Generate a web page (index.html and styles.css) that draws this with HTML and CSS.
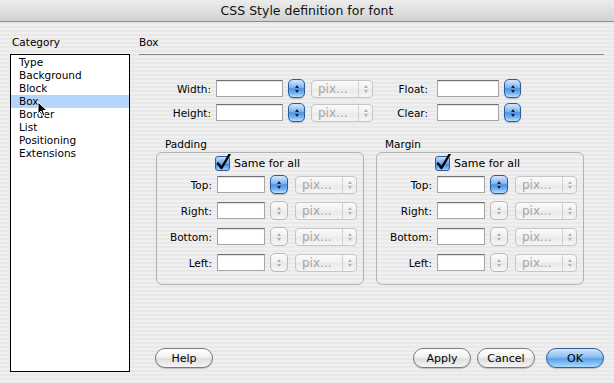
FILE: index.html
```html
<!DOCTYPE html>
<html lang="en">
<head>
  <meta charset="UTF-8">
  <title>CSS Style definition for font</title>
  <link rel="stylesheet" href="styles.css">
</head>
<body>
  <header class="titlebar">CSS Style definition for font</header>

  <div class="dialog">
    <aside class="sidebar">
      <div class="pane-title">Category</div>
      <ul class="category-list">
        <li>Type</li>
        <li>Background</li>
        <li>Block</li>
        <li class="selected">Box</li>
        <li>Border</li>
        <li>List</li>
        <li>Positioning</li>
        <li>Extensions</li>
      </ul>
    </aside>

    <main class="panel">
      <div class="panel-title">Box</div>

      <div class="size-rows">
        <div class="row">
          <label class="lbl lbl-size">Width:</label>
          <input class="field field-size" type="text">
          <span class="stepper active gap-s"></span>
          <span class="unit gap-m"><span class="unit-text">pix...</span><span class="unit-arrows"></span></span>
          <label class="lbl lbl-float">Float:</label>
          <input class="field field-float" type="text">
          <span class="stepper active gap-s"></span>
        </div>
        <div class="row">
          <label class="lbl lbl-size">Height:</label>
          <input class="field field-size" type="text">
          <span class="stepper active gap-s"></span>
          <span class="unit gap-m"><span class="unit-text">pix...</span><span class="unit-arrows"></span></span>
          <label class="lbl lbl-float">Clear:</label>
          <input class="field field-float" type="text">
          <span class="stepper active gap-s"></span>
        </div>
      </div>

      <div class="groups">
        <section class="group">
          <div class="group-title">Padding</div>
          <div class="group-box">
            <div class="same">
              <svg class="checkbox" width="16" height="17" viewBox="0 0 16 17">
                <defs>
                  <linearGradient id="cbA" x1="0" y1="0" x2="0" y2="1">
                    <stop offset="0" stop-color="#cfe4fb"/>
                    <stop offset="0.5" stop-color="#6aa6ea"/>
                    <stop offset="0.55" stop-color="#3f88e0"/>
                    <stop offset="1" stop-color="#a6d6ff"/>
                  </linearGradient>
                </defs>
                <rect x="0.5" y="2.5" width="14" height="14" rx="2.5" fill="url(#cbA)" stroke="#2c5c9e"/>
                <path d="M3 9.5 L6.5 14 L14.5 0.5" fill="none" stroke="#000" stroke-width="2.4" stroke-linecap="round" stroke-linejoin="round"/>
              </svg>
              <span>Same for all</span>
            </div>
            <div class="row box-row">
              <label class="lbl lbl-side">Top:</label>
              <input class="field field-side" type="text">
              <span class="stepper active gap-s wide"></span>
              <span class="unit gap-l"><span class="unit-text">pix...</span><span class="unit-arrows"></span></span>
            </div>
            <div class="row box-row">
              <label class="lbl lbl-side">Right:</label>
              <input class="field field-side" type="text">
              <span class="stepper gap-s wide"></span>
              <span class="unit gap-l"><span class="unit-text">pix...</span><span class="unit-arrows"></span></span>
            </div>
            <div class="row box-row">
              <label class="lbl lbl-side">Bottom:</label>
              <input class="field field-side" type="text">
              <span class="stepper gap-s wide"></span>
              <span class="unit gap-l"><span class="unit-text">pix...</span><span class="unit-arrows"></span></span>
            </div>
            <div class="row box-row">
              <label class="lbl lbl-side">Left:</label>
              <input class="field field-side" type="text">
              <span class="stepper gap-s wide"></span>
              <span class="unit gap-l"><span class="unit-text">pix...</span><span class="unit-arrows"></span></span>
            </div>
          </div>
        </section>

        <section class="group">
          <div class="group-title">Margin</div>
          <div class="group-box">
            <div class="same">
              <svg class="checkbox" width="16" height="17" viewBox="0 0 16 17">
                <defs>
                  <linearGradient id="cbB" x1="0" y1="0" x2="0" y2="1">
                    <stop offset="0" stop-color="#cfe4fb"/>
                    <stop offset="0.5" stop-color="#6aa6ea"/>
                    <stop offset="0.55" stop-color="#3f88e0"/>
                    <stop offset="1" stop-color="#a6d6ff"/>
                  </linearGradient>
                </defs>
                <rect x="0.5" y="2.5" width="14" height="14" rx="2.5" fill="url(#cbB)" stroke="#2c5c9e"/>
                <path d="M3 9.5 L6.5 14 L14.5 0.5" fill="none" stroke="#000" stroke-width="2.4" stroke-linecap="round" stroke-linejoin="round"/>
              </svg>
              <span>Same for all</span>
            </div>
            <div class="row box-row">
              <label class="lbl lbl-side">Top:</label>
              <input class="field field-side" type="text">
              <span class="stepper active gap-s wide"></span>
              <span class="unit gap-l"><span class="unit-text">pix...</span><span class="unit-arrows"></span></span>
            </div>
            <div class="row box-row">
              <label class="lbl lbl-side">Right:</label>
              <input class="field field-side" type="text">
              <span class="stepper gap-s wide"></span>
              <span class="unit gap-l"><span class="unit-text">pix...</span><span class="unit-arrows"></span></span>
            </div>
            <div class="row box-row">
              <label class="lbl lbl-side">Bottom:</label>
              <input class="field field-side" type="text">
              <span class="stepper gap-s wide"></span>
              <span class="unit gap-l"><span class="unit-text">pix...</span><span class="unit-arrows"></span></span>
            </div>
            <div class="row box-row">
              <label class="lbl lbl-side">Left:</label>
              <input class="field field-side" type="text">
              <span class="stepper gap-s wide"></span>
              <span class="unit gap-l"><span class="unit-text">pix...</span><span class="unit-arrows"></span></span>
            </div>
          </div>
        </section>
      </div>

      <div class="buttons">
        <button class="btn">Help</button>
        <button class="btn btn-apply">Apply</button>
        <button class="btn btn-cancel">Cancel</button>
        <button class="btn btn-ok">OK</button>
      </div>
    </main>
  </div>

  <!-- mouse pointer over the list -->
  <svg class="cursor" width="11" height="16" viewBox="0 0 11 16">
    <path d="M1 1 L1 13 L4 10 L6 15 L8 14 L6 9.5 L10 9.5 Z" fill="#000" stroke="#fff" stroke-width="1" stroke-linejoin="round"/>
  </svg>
</body>
</html>
```

FILE: styles.css
```css
:root {
  --stripe-a: #efefef;
  --stripe-b: #e8e8e8;
  --label-color: #000;
  --disabled-text: #a6a6a6;
  --field-border: #8f8f8f;
}

* {
  box-sizing: border-box;
}

body {
  margin: 0;
  width: 614px;
  height: 383px;
  overflow: hidden;
  font-family: "Lucida Grande", "DejaVu Sans", sans-serif;
  font-size: 10.5px;
  color: var(--label-color);
  background: repeating-linear-gradient(to bottom, var(--stripe-a) 0 2px, var(--stripe-b) 2px 4px);
}

.titlebar {
  height: 22px;
  line-height: 21px;
  text-align: center;
  font-size: 12.5px;
  color: #111;
  background: linear-gradient(to bottom, #ececec, #d2d2d2);
  border-bottom: 1px solid #8c8c8c;
}

.dialog {
  display: flex;
  padding: 0 10px;
}

.sidebar {
  width: 120px;
}

.pane-title,
.panel-title {
  padding-top: 13px;
  line-height: 14px;
}

.pane-title {
  padding-left: 2px;
  margin-bottom: 5px;
}

.category-list {
  list-style: none;
  margin: 0;
  padding: 1px 0 0;
  height: 318px;
  background: #fff;
  border: 1px solid #000;
}

.category-list li {
  line-height: 13px;
  padding-left: 8px;
}

.category-list li.selected {
  background: #b5d4fc;
}

.panel {
  margin-left: 9px;
  width: 465px;
}

.panel-title {
  padding-bottom: 5px;
  border-bottom: 1px solid #8a8a8a;
}

.size-rows {
  margin-top: 24px;
  display: flex;
  flex-direction: column;
  gap: 5px;
}

.row {
  display: flex;
  align-items: center;
  height: 19px;
}

.lbl {
  text-align: right;
  flex: none;
}

.lbl-size { width: 72px; }
.lbl-float { width: 55px; }
.lbl-side { width: 55px; }

.field {
  flex: none;
  height: 17px;
  margin: 0 0 0 5px;
  padding: 0;
  background: #fff;
  border: 1px solid #a6a6a6;
  border-top-color: #6f6f6f;
  box-shadow: inset 0 1px 1px rgba(0, 0, 0, 0.12);
}

.field-size { width: 67px; }
.field-float { width: 62px; margin-left: 9px; }
.field-side { width: 48px; }

.stepper {
  flex: none;
  width: 17px;
  height: 19px;
  border-radius: 5px;
  border: 1px solid #b9b9b9;
  background: linear-gradient(to bottom, #fbfbfb, #f0f0f0 50%, #e8e8e8 51%, #f7f7f7);
  display: flex;
  flex-direction: column;
  align-items: center;
  justify-content: center;
  gap: 2px;
}

.stepper.wide { width: 18px; }

.stepper::before,
.stepper::after {
  content: "";
  border-left: 2.5px solid transparent;
  border-right: 2.5px solid transparent;
}

.stepper::before { border-bottom: 3px solid #b0b0b0; }
.stepper::after { border-top: 3px solid #b0b0b0; }

.stepper.active {
  border-color: #2d5b98;
  background: linear-gradient(to bottom, #d6e8fc, #7fb3ee 45%, #4a8fe2 52%, #78b7f5 80%, #b9e3ff);
  box-shadow: 0 1px 1px rgba(0, 0, 0, 0.2);
}

.stepper.active::before { border-bottom-color: #14223a; }
.stepper.active::after { border-top-color: #14223a; }

.gap-s { margin-left: 5px; }
.gap-m { margin-left: 6px; }
.gap-l { margin-left: 7px; }

.unit {
  flex: none;
  width: 62px;
  height: 18px;
  display: flex;
  align-items: stretch;
  border: 1px solid #c6c6c6;
  border-radius: 4px;
  background: linear-gradient(to bottom, #fafafa, #f0f0f0 50%, #e9e9e9 51%, #f5f5f5);
  color: var(--disabled-text);
}

.unit-text {
  flex: 1;
  padding-left: 6px;
  line-height: 16px;
  font-size: 12px;
}

.unit-arrows {
  width: 14px;
  border-left: 1px solid #d0d0d0;
  display: flex;
  flex-direction: column;
  align-items: center;
  justify-content: center;
  gap: 2px;
}

.unit-arrows::before,
.unit-arrows::after {
  content: "";
  border-left: 2.5px solid transparent;
  border-right: 2.5px solid transparent;
}

.unit-arrows::before { border-bottom: 3px solid #b4b4b4; }
.unit-arrows::after { border-top: 3px solid #b4b4b4; }

.groups {
  display: flex;
  gap: 12px;
  margin-top: 15px;
  padding-left: 17px;
}

.group {
  width: 208px;
}

.group-title {
  padding-left: 9px;
  line-height: 14px;
  margin-bottom: 1px;
}

.group-box {
  height: 133px;
  padding-top: 1px;
  border: 1px solid #b2b2b2;
  border-radius: 6px;
  background: rgba(255, 255, 255, 0.08);
}

.same {
  display: flex;
  align-items: flex-end;
  gap: 3px;
  padding-left: 58px;
  height: 17px;
  line-height: 14px;
  font-size: 11px;
}

.box-row {
  margin-top: 7px;
}

.same + .box-row {
  margin-top: 4px;
}

.buttons {
  display: flex;
  margin-top: 63px;
  padding-left: 16px;
}

.btn {
  width: 58px;
  height: 20px;
  padding: 0;
  font-family: inherit;
  font-size: 11px;
  color: #000;
  border: 1px solid #7b7b7b;
  border-radius: 10px;
  background: linear-gradient(to bottom, #ffffff, #f1f1f1 45%, #dedede 55%, #f5f5f5);
  box-shadow: 0 1px 1px rgba(0, 0, 0, 0.2);
}

.btn-apply { margin-left: auto; }
.btn-cancel { margin-left: 6px; }
.btn-ok {
  margin-left: 11px;
  border-color: #35609e;
  background: linear-gradient(to bottom, #d2e6fc, #8cbdf2 45%, #5aa0ec 55%, #a9dcff);
}

.cursor {
  position: absolute;
  left: 37px;
  top: 101px;
}
```
